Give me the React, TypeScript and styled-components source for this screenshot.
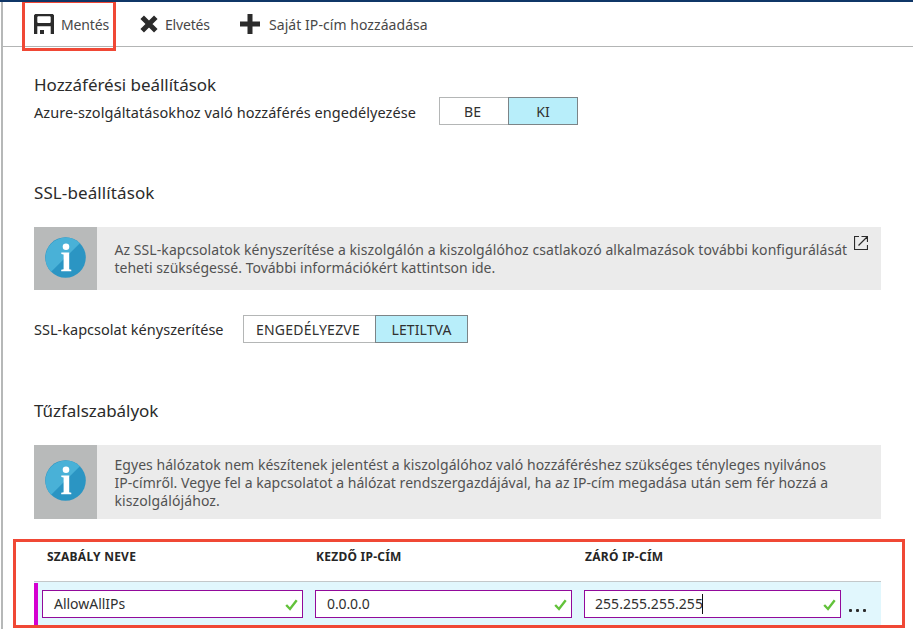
import React from "react";
import styled, { createGlobalStyle } from "styled-components";

const GlobalStyle = createGlobalStyle`
  * { box-sizing: border-box; }
  html, body { margin: 0; padding: 0; overflow: hidden; }
  body { background: #fff; font-family: "Noto Sans", "Open Sans", sans-serif; color: #2b2b2b; }
`;

const Page = styled.div`
  position: relative;
  width: 913px;
  height: 629px;
  overflow: hidden;
  border-top: 2px solid #0f3667;
`;

const Blade = styled.main`
  height: 627px;
  margin-left: 1px;
  border-left: 2px solid #b6b8b8;
`;

const Toolbar = styled.div`
  display: flex;
  align-items: center;
  height: 45px;
  padding-left: 31px;
  border-bottom: 1px solid #b3b5b5;
`;

const Command = styled.button<{ $width: number; $gap: number; $spacing: number }>`
  display: flex;
  flex: none;
  align-items: center;
  gap: ${(p) => p.$gap}px;
  width: ${(p) => p.$width}px;
  padding: 0;
  border: 0;
  background: none;
  color: #484848;
  font: 14px/20px "Noto Sans", sans-serif;
  letter-spacing: ${(p) => p.$spacing}px;
  white-space: nowrap;
`;

const CommandLabel = styled.span`
  padding-top: 2px;
`;

const CommandIcon = styled.svg`
  display: block;
  flex: none;
`;

const Content = styled.div`
  width: 878px;
  padding-left: 31px;
`;

const Heading = styled.h2<{ $top: number; $spacing: number }>`
  height: 24px;
  margin: ${(p) => p.$top}px 0 0;
  font-size: 17px;
  font-weight: 400;
  line-height: 24px;
  letter-spacing: ${(p) => p.$spacing}px;
  color: #2b2b2b;
`;

const Setting = styled.div<{ $top: number }>`
  display: flex;
  align-items: center;
  height: 28px;
  margin-top: ${(p) => p.$top}px;
`;

const SettingLabel = styled.span<{ $width: number; $spacing: number; $drop: number }>`
  flex: none;
  width: ${(p) => p.$width}px;
  padding-top: ${(p) => p.$drop}px;
  font-size: 14.5px;
  line-height: 20px;
  letter-spacing: ${(p) => p.$spacing}px;
  white-space: nowrap;
`;

const Option = styled.button<{ $width: number; $active?: boolean; $spacing?: number }>`
  flex: none;
  width: ${(p) => p.$width}px;
  height: 28px;
  padding: 1px ${(p) => (p.$active ? 0 : 3)}px 0 0;
  border: 1px solid ${(p) => (p.$active ? "#7c8487" : "#b4b6b6")};
  border-right-width: ${(p) => (p.$active ? 1 : 0)}px;
  background: ${(p) => (p.$active ? "#b8eefa" : "#fff")};
  color: #303030;
  font: 14px/20px "Noto Sans", sans-serif;
  letter-spacing: ${(p) => p.$spacing ?? 0}px;
`;

const Notice = styled.section<{ $top: number; $height: number }>`
  display: flex;
  height: ${(p) => p.$height}px;
  margin-top: ${(p) => p.$top}px;
  background: #ebebeb;
`;

const NoticeBadge = styled.div<{ $pad: number }>`
  flex: none;
  width: 63px;
  padding: ${(p) => p.$pad}px 0 0 11px;
  background: #b8baba;
`;

const NoticeText = styled.div<{ $pad: number }>`
  width: 740px;
  padding: ${(p) => p.$pad}px 0 0 17.5px;
  color: #525252;
  font-size: 14px;
  line-height: 18px;
  white-space: nowrap;
`;

const Line = styled.div<{ $spacing: number }>`
  letter-spacing: ${(p) => p.$spacing}px;
`;

const LinkIcon = styled.svg`
  display: block;
  flex: none;
  margin: 9px 0 0 17px;
`;

const HeaderRow = styled.div`
  display: grid;
  grid-template-columns: 269px 269px 1fr;
  height: 40px;
  margin-top: 23px;
  padding: 5px 0 0 13px;
  border-bottom: 1px solid #c3c8ca;
`;

const HeaderCell = styled.div<{ $spacing: number }>`
  font-size: 12px;
  font-weight: 700;
  line-height: 20px;
  letter-spacing: ${(p) => p.$spacing}px;
  color: #262626;
`;

const RuleRow = styled.div`
  display: flex;
  height: 45px;
  padding: 8px 0 0 8px;
  background: linear-gradient(#d400d0, #d400d0) 0 1px / 4px 44px no-repeat #e1f7fd;
`;

const Field = styled.div<{ $width: number; $spacing: number; $pad?: number }>`
  display: flex;
  align-items: center;
  flex: none;
  width: ${(p) => p.$width}px;
  height: 28px;
  margin-right: 12px;
  padding: 0 4px 0 ${(p) => p.$pad ?? 11}px;
  border: 1px solid #920a9b;
  background: #fff;
  font-size: 14px;
  line-height: 20px;
  letter-spacing: ${(p) => p.$spacing}px;
  color: #303030;
`;

const Caret = styled.span`
  width: 1px;
  height: 20px;
  margin-left: -1px;
  background: #111;
`;

const CheckIcon = styled.svg`
  display: block;
  margin: 2px 0 0 auto;
`;

const More = styled.div`
  display: flex;
  gap: 4px;
  margin: 19px 0 0 -4px;
`;

const Dot = styled.i`
  width: 3px;
  height: 3px;
  border-radius: 1px;
  background: #2b2b2b;
`;

const Highlight = styled.div<{ $x: number; $y: number; $w: number; $h: number }>`
  position: absolute;
  left: ${(p) => p.$x}px;
  top: ${(p) => p.$y}px;
  width: ${(p) => p.$w}px;
  height: ${(p) => p.$h}px;
  border: 3px solid #f04835;
  pointer-events: none;
`;

const InfoIcon = () => (
  <svg width="41" height="41" viewBox="0 0 41 41" display="block">
    <circle cx="20.5" cy="20.5" r="20.3" fill="#2b95c3" />
    <path d="M6.15 34.85A20.3 20.3 0 0 1 34.85 6.15Z" fill="#49b1d7" />
    <circle cx="21" cy="9.7" r="3.3" fill="#fff" />
    <path
      d="M16.3 15.5H24.2V32.2L26.3 32.8V34.3H16.2V32.8L18.6 32.2V17.5L16.3 16.9Z"
      fill="#fff"
    />
  </svg>
);

const Check = () => (
  <CheckIcon width="13" height="12" viewBox="0 0 13 12">
    <path d="M1.2 6 5 10 11.7 1.3" fill="none" stroke="#62c23a" strokeWidth="2.4" />
  </CheckIcon>
);

export default function App() {
  return (
    <>
      <GlobalStyle />
      <Page>
        <Blade>
          <Toolbar>
            <Command $width={106} $gap={7} $spacing={-0.15}>
              <CommandIcon width="20" height="20" viewBox="0 0 20 20">
                <path
                  fillRule="evenodd"
                  fill="#2b2b2b"
                  d="M1.2 0H18.8L20 1.2V20H16.7V12.2H3.3V20H0V1.2ZM4 2.2 3.3 2.9V8.3L4 9H16L16.7 8.3V2.9L16 2.2ZM6 16H10V20H6Z"
                />
              </CommandIcon>
              <CommandLabel>Mentés</CommandLabel>
            </Command>
            <Command $width={100} $gap={7} $spacing={-0.18}>
              <CommandIcon width="18" height="18" viewBox="0 0 18 18">
                <path d="M2.2 2.2 15.8 15.8M15.8 2.2 2.2 15.8" stroke="#2b2b2b" strokeWidth="5" />
              </CommandIcon>
              <CommandLabel>Elvetés</CommandLabel>
            </Command>
            <Command $width={190} $gap={9} $spacing={0.06}>
              <CommandIcon width="20" height="20" viewBox="0 0 20 20">
                <path d="M10 0V20M0 10H20" stroke="#2b2b2b" strokeWidth="5" />
              </CommandIcon>
              <CommandLabel>Saját IP-cím hozzáadása</CommandLabel>
            </Command>
          </Toolbar>

          <Content>
            <Heading $top={26} $spacing={-0.03}>Hozzáférési beállítások</Heading>
            <Setting $top={0}>
              <SettingLabel $width={405} $spacing={0.065} $drop={2}>
                Azure-szolgáltatásokhoz való hozzáférés engedélyezése
              </SettingLabel>
              <Option $width={69} $spacing={0}>BE</Option>
              <Option $width={70} $active>KI</Option>
            </Setting>

            <Heading $top={56} $spacing={0.1}>SSL-beállítások</Heading>
            <Notice $top={22} $height={63}>
              <NoticeBadge $pad={10}><InfoIcon /></NoticeBadge>
              <NoticeText $pad={14}>
                <Line $spacing={0.066}>
                  Az SSL-kapcsolatok kényszerítése a kiszolgálón a kiszolgálóhoz csatlakozó alkalmazások további konfigurálását
                </Line>
                <Line $spacing={0.005}>teheti szükségessé. További információkért kattintson ide.</Line>
              </NoticeText>
              <LinkIcon width="14" height="14" viewBox="0 0 14 14">
                <path
                  d="M5 .5H.5V13.5H13.5V9M7.5 .5H13.5V6M13.5 .5 4.5 9.5"
                  fill="none"
                  stroke="#2b2b2b"
                  strokeWidth="1.2"
                />
              </LinkIcon>
            </Notice>

            <Setting $top={25}>
              <SettingLabel $width={209} $spacing={0.02} $drop={0}>SSL-kapcsolat kényszerítése</SettingLabel>
              <Option $width={132} $spacing={0.24}>ENGEDÉLYEZVE</Option>
              <Option $width={93} $active $spacing={0.08}>LETILTVA</Option>
            </Setting>

            <Heading $top={56} $spacing={-0.04}>Tűzfalszabályok</Heading>
            <Notice $top={22} $height={74}>
              <NoticeBadge $pad={15}><InfoIcon /></NoticeBadge>
              <NoticeText $pad={11}>
                <Line $spacing={0.042}>
                  Egyes hálózatok nem készítenek jelentést a kiszolgálóhoz való hozzáféréshez szükséges tényleges nyilvános
                </Line>
                <Line $spacing={0.036}>
                  IP-címről. Vegye fel a kapcsolatot a hálózat rendszergazdájával, ha az IP-cím megadása után sem fér hozzá a
                </Line>
                <Line $spacing={0.1}>kiszolgálójához.</Line>
              </NoticeText>
            </Notice>

            <HeaderRow>
              <HeaderCell $spacing={0.25}>SZABÁLY NEVE</HeaderCell>
              <HeaderCell $spacing={0.25}>KEZDŐ IP-CÍM</HeaderCell>
              <HeaderCell $spacing={0.28}>ZÁRÓ IP-CÍM</HeaderCell>
            </HeaderRow>
            <RuleRow>
              <Field $width={261} $spacing={-0.03}>AllowAllIPs<Check /></Field>
              <Field $width={257} $spacing={-0.1}>0.0.0.0<Check /></Field>
              <Field $width={257} $spacing={0.04} $pad={10}>
                255.255.255.255<Caret /><Check />
              </Field>
              <More><Dot /><Dot /><Dot /></More>
            </RuleRow>
          </Content>
        </Blade>
        <Highlight $x={22} $y={-2} $w={94} $h={53 - 2} />
        <Highlight $x={13} $y={537} $w={892} $h={89} />
      </Page>
    </>
  );
}
